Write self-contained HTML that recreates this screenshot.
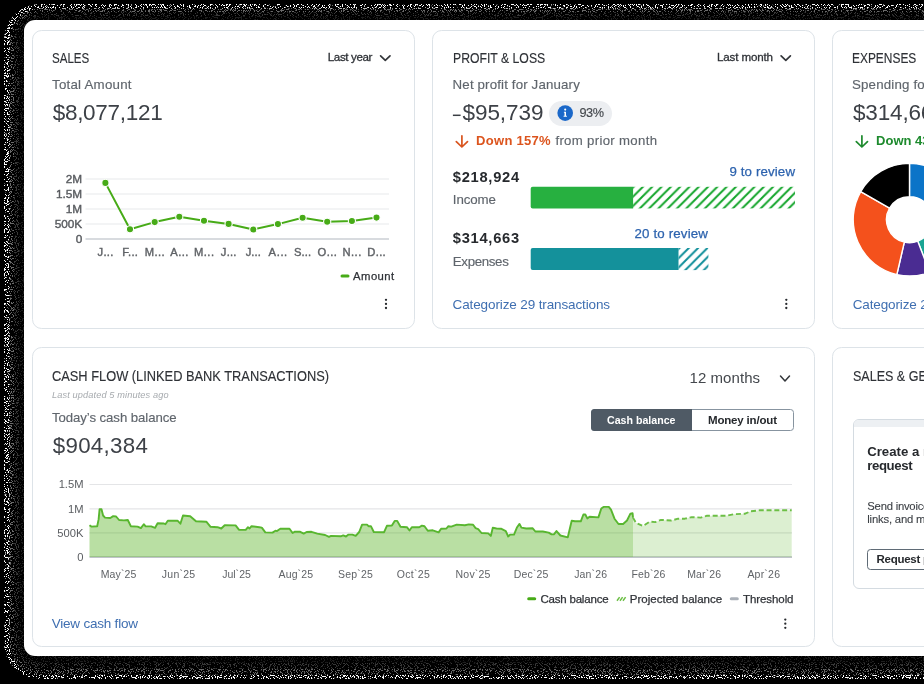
<!DOCTYPE html>
<html><head><meta charset="utf-8">
<style>
html,body{margin:0;padding:0;background:#000;}
body{width:924px;height:684px;position:relative;overflow:hidden;font-family:"Liberation Sans",sans-serif;color:#393a3d;}
.abs{position:absolute;}
#panel{position:absolute;left:24px;top:20px;width:912px;height:636px;background:#fff;border-radius:11px 0 0 11px;}
.card{position:absolute;box-sizing:border-box;border:1.3px solid #dde3e8;border-radius:9.6px;background:#fff;}
.t{position:absolute;white-space:nowrap;line-height:1;}
.b{display:inline-block;width:0;height:0;}
#tx{position:absolute;left:0;top:0;width:924px;height:684px;will-change:transform;}
svg{position:absolute;left:0;top:0;overflow:visible;}
</style></head><body>
<svg width="924" height="684" viewBox="0 0 924 684" style="z-index:0">
<defs>
<filter id="nz" x="0" y="0" width="924" height="684" filterUnits="userSpaceOnUse" color-interpolation-filters="sRGB">
<feTurbulence type="fractalNoise" baseFrequency="0.85" numOctaves="2" seed="7"/>
<feColorMatrix type="matrix" values="0 0 0 0 1  0 0 0 0 1  0 0 0 0 1  30 0 0 0 -16.8"/>
</filter>
<mask id="nm" maskUnits="userSpaceOnUse" x="0" y="0" width="924" height="684"><rect width="924" height="684" filter="url(#nz)"/></mask>
</defs>
<g mask="url(#nm)">
<rect x="4" y="4" width="960" height="675" rx="36" fill="#fff"/>
<rect x="9.5" y="8.5" width="960" height="666.5" rx="31" fill="#6a6a6a"/>
<rect x="14" y="12" width="960" height="657" rx="26" fill="#383838"/>
<rect x="19" y="16" width="960" height="647" rx="20" fill="#1f1f1f"/>
</g>
</svg>
<div id="panel"></div>
<div class="card" style="left:31.8px;top:30.05px;width:382.9px;height:299.1px;"></div>
<div class="card" style="left:431.8px;top:30.05px;width:382.9px;height:299.1px;"></div>
<div class="card" style="left:831.9px;top:30.05px;width:382.9px;height:299.1px;"></div>
<div class="card" style="left:31.8px;top:347.45px;width:782.9px;height:299.1px;"></div>
<div class="card" style="left:831.9px;top:347.45px;width:382.9px;height:299.1px;"></div>
<div class="abs" style="left:852.5px;top:419px;width:200px;height:169.5px;box-sizing:border-box;border:1.5px solid #d4dbe1;border-radius:6px;background:#fff;overflow:hidden;"><div style="height:6.5px;background:#edf0f3;"></div></div>
<div class="abs" style="left:867.3px;top:548.5px;width:140px;height:21px;box-sizing:border-box;border:1.7px solid #5f6b76;border-radius:3.5px;background:#fff;"></div>
<div class="abs" style="left:549px;top:100.5px;width:63px;height:25.5px;border-radius:13px;background:#eceef1;"></div>
<div class="abs" style="left:590.8px;top:408.9px;width:203.2px;height:21.9px;box-sizing:border-box;border:1.6px solid #8794a0;border-radius:3.5px;background:#fff;"></div>
<div class="abs" style="left:590.8px;top:408.9px;width:101.4px;height:21.9px;border-radius:3.5px 0 0 3.5px;background:#4f5a65;"></div>
<svg width="924" height="684" viewBox="0 0 924 684">
<defs>
<pattern id="hg" width="9.3" height="9.3" patternUnits="userSpaceOnUse" patternTransform="translate(633.6,186.8)"><path d="M-2,11.3 L11.3,-2 M-2,2 L2,-2 M7.3,11.3 L11.3,7.3" stroke="#14a52b" stroke-width="2" fill="none"/></pattern>
<pattern id="ht" width="9.3" height="9.3" patternUnits="userSpaceOnUse" patternTransform="translate(679.5,248)"><path d="M-2,11.3 L11.3,-2 M-2,2 L2,-2 M7.3,11.3 L11.3,7.3" stroke="#0e8e99" stroke-width="2" fill="none"/></pattern>
</defs>
<polyline points="380.6,55.9 385.3,60.3 390.0,55.9" fill="none" stroke="#33363a" stroke-width="1.7" stroke-linecap="round" stroke-linejoin="round"/>
<polyline points="781.1,55.9 785.8,60.3 790.4,55.9" fill="none" stroke="#33363a" stroke-width="1.7" stroke-linecap="round" stroke-linejoin="round"/>
<polyline points="780.5,376.0 785.0,381.0 789.5,376.0" fill="none" stroke="#33363a" stroke-width="1.5" stroke-linecap="round" stroke-linejoin="round"/>
<circle cx="386.0" cy="299.8" r="1.15" fill="#26292d"/>
<circle cx="386.0" cy="303.9" r="1.15" fill="#26292d"/>
<circle cx="386.0" cy="308.0" r="1.15" fill="#26292d"/>
<circle cx="786.3" cy="299.8" r="1.15" fill="#26292d"/>
<circle cx="786.3" cy="303.9" r="1.15" fill="#26292d"/>
<circle cx="786.3" cy="308.0" r="1.15" fill="#26292d"/>
<circle cx="785.3" cy="619.6" r="1.15" fill="#26292d"/>
<circle cx="785.3" cy="623.7" r="1.15" fill="#26292d"/>
<circle cx="785.3" cy="627.8" r="1.15" fill="#26292d"/>
<line x1="85.5" x2="389" y1="179" y2="179" stroke="#e8e9eb" stroke-width="1.1"/>
<line x1="85.5" x2="389" y1="194" y2="194" stroke="#e8e9eb" stroke-width="1.1"/>
<line x1="85.5" x2="389" y1="209" y2="209" stroke="#e8e9eb" stroke-width="1.1"/>
<line x1="85.5" x2="389" y1="224" y2="224" stroke="#e8e9eb" stroke-width="1.1"/>
<line x1="85.5" x2="389" y1="239" y2="239" stroke="#cbcfd4" stroke-width="1.4"/>
<polyline points="105.4,182.9 130.0,229.3 154.7,222.1 179.3,216.7 204.0,220.8 228.6,223.9 253.3,229.5 277.9,224.1 302.6,217.8 327.2,221.7 351.9,221.0 376.5,217.6" fill="none" stroke="#47ab17" stroke-width="2" stroke-linejoin="round"/>
<circle cx="105.4" cy="182.9" r="3.6" fill="#47ab17" stroke="#fff" stroke-width="1.1"/>
<circle cx="130.0" cy="229.3" r="3.6" fill="#47ab17" stroke="#fff" stroke-width="1.1"/>
<circle cx="154.7" cy="222.1" r="3.6" fill="#47ab17" stroke="#fff" stroke-width="1.1"/>
<circle cx="179.3" cy="216.7" r="3.6" fill="#47ab17" stroke="#fff" stroke-width="1.1"/>
<circle cx="204.0" cy="220.8" r="3.6" fill="#47ab17" stroke="#fff" stroke-width="1.1"/>
<circle cx="228.6" cy="223.9" r="3.6" fill="#47ab17" stroke="#fff" stroke-width="1.1"/>
<circle cx="253.3" cy="229.5" r="3.6" fill="#47ab17" stroke="#fff" stroke-width="1.1"/>
<circle cx="277.9" cy="224.1" r="3.6" fill="#47ab17" stroke="#fff" stroke-width="1.1"/>
<circle cx="302.6" cy="217.8" r="3.6" fill="#47ab17" stroke="#fff" stroke-width="1.1"/>
<circle cx="327.2" cy="221.7" r="3.6" fill="#47ab17" stroke="#fff" stroke-width="1.1"/>
<circle cx="351.9" cy="221.0" r="3.6" fill="#47ab17" stroke="#fff" stroke-width="1.1"/>
<circle cx="376.5" cy="217.6" r="3.6" fill="#47ab17" stroke="#fff" stroke-width="1.1"/>
<line x1="342" x2="348" y1="276" y2="276" stroke="#47ab17" stroke-width="3" stroke-linecap="round"/>
<circle cx="565.2" cy="113.1" r="7.8" fill="#1b68c9"/>
<circle cx="565.2" cy="109.6" r="1.05" fill="#fff"/><path d="M563.9,111.7h2.1v4.1h0.9v1h-3.3v-1h0.9v-3.1h-0.6z" fill="#fff"/>
<line x1="452.9" x2="460.6" y1="115.3" y2="115.3" stroke="#3a3e44" stroke-width="1.5"/>
<path d="M461.9,135.8 V146.8 M456.3,141.6 L461.9,147 L467.5,141.6" fill="none" stroke="#d9541e" stroke-width="1.7" stroke-linecap="round" stroke-linejoin="round"/>
<path d="M861.9,135.8 V146.8 M856.3,141.6 L861.9,147 L867.5,141.6" fill="none" stroke="#1d8a2d" stroke-width="1.7" stroke-linecap="round" stroke-linejoin="round"/>
<path d="M532.7,186.8 H633.1 V208.4 H532.7 a2,2 0 0 1 -2,-2 V188.8 a2,2 0 0 1 2,-2z" fill="#27b040"/>
<rect x="633.1" y="186.8" width="161.9" height="21.6" fill="url(#hg)"/>
<path d="M532.7,248 H678.5 V270.1 H532.7 a2,2 0 0 1 -2,-2 V250 a2,2 0 0 1 2,-2z" fill="#14919b"/>
<rect x="678.5" y="248" width="29.9" height="22.1" fill="url(#ht)"/>
<path d="M909.50,163.40 A56.3,56.3 0 0 1 958.26,247.85 L929.42,231.20 A23,23 0 0 0 909.50,196.70 Z" fill="#0b74c8" stroke="#fff" stroke-width="1.4" stroke-linejoin="round"/>
<path d="M958.26,247.85 A56.3,56.3 0 0 1 929.68,272.26 L917.74,241.17 A23,23 0 0 0 929.42,231.20 Z" fill="#1aa594" stroke="#fff" stroke-width="1.4" stroke-linejoin="round"/>
<path d="M929.68,272.26 A56.3,56.3 0 0 1 896.84,274.56 L904.33,242.11 A23,23 0 0 0 917.74,241.17 Z" fill="#4a2c92" stroke="#fff" stroke-width="1.4" stroke-linejoin="round"/>
<path d="M896.84,274.56 A56.3,56.3 0 0 1 860.74,191.55 L889.58,208.20 A23,23 0 0 0 904.33,242.11 Z" fill="#f4511c" stroke="#fff" stroke-width="1.4" stroke-linejoin="round"/>
<path d="M860.74,191.55 A56.3,56.3 0 0 1 909.50,163.40 L909.50,196.70 A23,23 0 0 0 889.58,208.20 Z" fill="#000" stroke="#fff" stroke-width="1.4" stroke-linejoin="round"/>
<line x1="89.5" x2="792" y1="484.5" y2="484.5" stroke="#e4e5e7" stroke-width="1.2"/>
<line x1="89.5" x2="792" y1="508.8" y2="508.8" stroke="#e4e5e7" stroke-width="1.2"/>
<line x1="89.5" x2="792" y1="532.9" y2="532.9" stroke="#e4e5e7" stroke-width="1.2"/>
<line x1="89.5" x2="792" y1="557.1" y2="557.1" stroke="#bfc3c9" stroke-width="1.6"/>
<polygon points="89.5,525.2 91.4,526.6 97.2,526.2 98.6,519.4 99.6,509.2 101.5,509.2 103.1,515.5 105.0,517.6 110.3,518.0 113.2,516.1 116.1,516.5 119.1,520.0 123.9,520.4 127.8,520.0 130.8,526.2 137.6,526.6 140.9,528.1 143.8,524.2 145.4,526.2 151.2,526.4 155.1,527.8 157.6,523.3 163.9,523.5 165.4,524.2 167.8,520.7 177.5,520.7 180.4,523.7 183.0,515.5 190.2,516.3 196.0,521.3 206.3,521.7 210.6,526.8 217.5,527.2 221.3,528.5 224.7,525.2 235.6,525.4 238.9,529.7 245.7,529.9 248.0,527.2 249.6,528.5 251.5,526.2 259.3,527.2 261.8,527.6 265.3,532.4 272.5,532.6 275.4,530.7 277.0,531.1 280.3,528.7 289.5,528.7 292.6,533.0 294.9,531.7 299.8,531.7 303.7,533.6 306.6,532.0 311.5,531.8 317.3,533.6 325.1,535.0 329.0,536.9 331.0,535.9 340.7,536.3 343.2,535.4 346.0,536.5 348.5,534.6 352.4,534.6 355.7,535.9 359.2,532.0 362.1,524.6 367.0,524.6 368.5,526.2 370.9,526.2 373.8,532.0 384.1,532.2 386.9,525.8 391.9,525.6 394.7,520.9 397.2,520.9 400.5,526.8 406.9,527.2 409.5,530.5 411.8,527.2 419.2,527.2 421.9,525.6 424.5,526.2 427.8,530.7 432.8,530.3 438.6,532.4 441.1,528.7 446.4,528.5 448.4,526.2 451.3,526.6 456.7,524.6 464.9,525.2 468.8,524.4 473.1,524.8 475.6,528.1 478.2,529.1 481.5,533.0 488.3,533.4 490.8,535.9 492.8,527.8 496.5,528.5 501.0,528.7 505.8,531.1 508.2,536.5 510.1,534.6 514.0,534.6 517.1,527.2 519.5,523.9 521.4,527.6 526.3,528.5 532.7,528.3 535.4,531.5 542.8,531.5 548.7,532.6 551.6,534.4 554.1,534.2 556.5,531.1 560.4,535.5 567.8,537.3 571.7,520.7 575.0,521.3 580.8,521.3 583.4,514.5 585.3,514.5 587.3,518.4 589.6,516.8 598.4,517.4 601.3,508.5 603.5,506.9 608.8,506.9 611.0,509.6 614.5,518.7 618.5,524.0 623.1,524.0 627.0,520.5 630.4,513.7 632.6,513.3 633.0,517.6 633,557.1 89.5,557.1" fill="#4fae1a" fill-opacity="0.4"/>
<polygon points="633.0,517.6 636.0,522.8 642.9,526.0 649.7,521.7 655.4,522.1 661.0,519.9 671.3,520.5 678.1,518.7 684.9,518.7 691.7,517.1 700.8,517.6 706.5,515.8 725.8,515.8 733.8,514.2 745.1,513.7 750.8,511.2 759.9,510.3 791.7,510.3 791.7,557.1 633,557.1" fill="#4fae1a" fill-opacity="0.2"/>
<polyline points="89.5,525.2 91.4,526.6 97.2,526.2 98.6,519.4 99.6,509.2 101.5,509.2 103.1,515.5 105.0,517.6 110.3,518.0 113.2,516.1 116.1,516.5 119.1,520.0 123.9,520.4 127.8,520.0 130.8,526.2 137.6,526.6 140.9,528.1 143.8,524.2 145.4,526.2 151.2,526.4 155.1,527.8 157.6,523.3 163.9,523.5 165.4,524.2 167.8,520.7 177.5,520.7 180.4,523.7 183.0,515.5 190.2,516.3 196.0,521.3 206.3,521.7 210.6,526.8 217.5,527.2 221.3,528.5 224.7,525.2 235.6,525.4 238.9,529.7 245.7,529.9 248.0,527.2 249.6,528.5 251.5,526.2 259.3,527.2 261.8,527.6 265.3,532.4 272.5,532.6 275.4,530.7 277.0,531.1 280.3,528.7 289.5,528.7 292.6,533.0 294.9,531.7 299.8,531.7 303.7,533.6 306.6,532.0 311.5,531.8 317.3,533.6 325.1,535.0 329.0,536.9 331.0,535.9 340.7,536.3 343.2,535.4 346.0,536.5 348.5,534.6 352.4,534.6 355.7,535.9 359.2,532.0 362.1,524.6 367.0,524.6 368.5,526.2 370.9,526.2 373.8,532.0 384.1,532.2 386.9,525.8 391.9,525.6 394.7,520.9 397.2,520.9 400.5,526.8 406.9,527.2 409.5,530.5 411.8,527.2 419.2,527.2 421.9,525.6 424.5,526.2 427.8,530.7 432.8,530.3 438.6,532.4 441.1,528.7 446.4,528.5 448.4,526.2 451.3,526.6 456.7,524.6 464.9,525.2 468.8,524.4 473.1,524.8 475.6,528.1 478.2,529.1 481.5,533.0 488.3,533.4 490.8,535.9 492.8,527.8 496.5,528.5 501.0,528.7 505.8,531.1 508.2,536.5 510.1,534.6 514.0,534.6 517.1,527.2 519.5,523.9 521.4,527.6 526.3,528.5 532.7,528.3 535.4,531.5 542.8,531.5 548.7,532.6 551.6,534.4 554.1,534.2 556.5,531.1 560.4,535.5 567.8,537.3 571.7,520.7 575.0,521.3 580.8,521.3 583.4,514.5 585.3,514.5 587.3,518.4 589.6,516.8 598.4,517.4 601.3,508.5 603.5,506.9 608.8,506.9 611.0,509.6 614.5,518.7 618.5,524.0 623.1,524.0 627.0,520.5 630.4,513.7 632.6,513.3 633.0,517.6" fill="none" stroke="#58b62f" stroke-width="1.9" stroke-linejoin="round"/>
<polyline points="633.0,517.6 636.0,522.8 642.9,526.0 649.7,521.7 655.4,522.1 661.0,519.9 671.3,520.5 678.1,518.7 684.9,518.7 691.7,517.1 700.8,517.6 706.5,515.8 725.8,515.8 733.8,514.2 745.1,513.7 750.8,511.2 759.9,510.3 791.7,510.3" fill="none" stroke="#6cbf45" stroke-width="1.9" stroke-dasharray="5,2.8" stroke-linejoin="round"/>
<line x1="528.7" x2="534.7" y1="598.8" y2="598.8" stroke="#47ab17" stroke-width="3" stroke-linecap="round"/>
<path d="M617,600.7 l2.6,-3.6 M620,600.7 l2.6,-3.6 M623,600.7 l2.6,-3.6" fill="none" stroke="#6cbf45" stroke-width="1.5"/>
<line x1="731.3" x2="737.3" y1="598.8" y2="598.8" stroke="#aab0b8" stroke-width="3" stroke-linecap="round"/>
</svg>
<div id="tx">
<div class="t" id="t0" style="top:51.01px;font-size:14px;color:#2f3237;-webkit-text-stroke:0.15px #2f3237;left:52.30px;transform-origin:0 0;transform:scaleX(0.8241);">SALES</div>
<div class="t" id="t1" style="top:51.01px;font-size:11.6px;color:#2f3237;-webkit-text-stroke:0.3px #2f3237;letter-spacing:-0.388px;left:327.80px;">Last year</div>
<div class="t" id="t2" style="top:78.01px;font-size:13.3px;color:#5f656c;-webkit-text-stroke:0.15px #5f656c;letter-spacing:0.239px;left:52.00px;">Total Amount</div>
<div class="t" id="t3" style="top:102.00px;font-size:22.5px;color:#3d4147;letter-spacing:-0.292px;left:52.70px;">$8,077,121</div>
<div class="t" id="t4" style="top:174.01px;font-size:11.8px;color:#595c60;-webkit-text-stroke:0.4px #595c60;right:841.80px;">2M</div>
<div class="t" id="t5" style="top:189.01px;font-size:11.8px;color:#595c60;-webkit-text-stroke:0.4px #595c60;right:841.80px;">1.5M</div>
<div class="t" id="t6" style="top:204.01px;font-size:11.8px;color:#595c60;-webkit-text-stroke:0.4px #595c60;right:841.80px;">1M</div>
<div class="t" id="t7" style="top:219.01px;font-size:11.8px;color:#595c60;-webkit-text-stroke:0.4px #595c60;right:841.80px;">500K</div>
<div class="t" id="t8" style="top:234.01px;font-size:11.8px;color:#595c60;-webkit-text-stroke:0.4px #595c60;right:841.80px;">0</div>
<div class="t" id="t9" style="top:247.01px;font-size:11.2px;color:#5f6266;-webkit-text-stroke:0.4px #5f6266;letter-spacing:0.293px;left:105.55px;transform:translateX(-50%);">J...</div>
<div class="t" id="t10" style="top:247.01px;font-size:11.2px;color:#5f6266;-webkit-text-stroke:0.4px #5f6266;letter-spacing:0.226px;left:130.16px;transform:translateX(-50%);">F...</div>
<div class="t" id="t11" style="top:247.01px;font-size:11.2px;color:#5f6266;-webkit-text-stroke:0.4px #5f6266;letter-spacing:0.481px;left:154.93px;transform:translateX(-50%);">M...</div>
<div class="t" id="t12" style="top:247.01px;font-size:11.2px;color:#5f6266;-webkit-text-stroke:0.4px #5f6266;letter-spacing:0.401px;left:179.54px;transform:translateX(-50%);">A...</div>
<div class="t" id="t13" style="top:247.01px;font-size:11.2px;color:#5f6266;-webkit-text-stroke:0.4px #5f6266;letter-spacing:0.481px;left:204.22px;transform:translateX(-50%);">M...</div>
<div class="t" id="t14" style="top:247.01px;font-size:11.2px;color:#5f6266;-webkit-text-stroke:0.4px #5f6266;letter-spacing:0.226px;left:228.74px;transform:translateX(-50%);">J...</div>
<div class="t" id="t15" style="top:247.01px;font-size:11.2px;color:#5f6266;-webkit-text-stroke:0.4px #5f6266;letter-spacing:0.093px;left:253.32px;transform:translateX(-50%);">J...</div>
<div class="t" id="t16" style="top:247.01px;font-size:11.2px;color:#5f6266;-webkit-text-stroke:0.4px #5f6266;letter-spacing:0.601px;left:278.22px;transform:translateX(-50%);">A...</div>
<div class="t" id="t17" style="top:247.01px;font-size:11.2px;color:#5f6266;-webkit-text-stroke:0.4px #5f6266;letter-spacing:0.034px;left:302.58px;transform:translateX(-50%);">S...</div>
<div class="t" id="t18" style="top:247.01px;font-size:11.2px;color:#5f6266;-webkit-text-stroke:0.4px #5f6266;letter-spacing:0.490px;left:327.45px;transform:translateX(-50%);">O...</div>
<div class="t" id="t19" style="top:247.01px;font-size:11.2px;color:#5f6266;-webkit-text-stroke:0.4px #5f6266;letter-spacing:0.465px;left:352.08px;transform:translateX(-50%);">N...</div>
<div class="t" id="t20" style="top:247.01px;font-size:11.2px;color:#5f6266;-webkit-text-stroke:0.4px #5f6266;letter-spacing:0.331px;left:376.66px;transform:translateX(-50%);">D...</div>
<div class="t" id="t21" style="top:271.01px;font-size:11.3px;color:#2f3237;-webkit-text-stroke:0.25px #2f3237;letter-spacing:0.433px;left:353.10px;">Amount</div>
<div class="t" id="t22" style="top:51.01px;font-size:14px;color:#2f3237;-webkit-text-stroke:0.15px #2f3237;left:452.60px;transform-origin:0 0;transform:scaleX(0.8735);">PROFIT &amp; LOSS</div>
<div class="t" id="t23" style="top:51.01px;font-size:11.6px;color:#2f3237;-webkit-text-stroke:0.3px #2f3237;letter-spacing:-0.151px;left:717.00px;">Last month</div>
<div class="t" id="t24" style="top:78.01px;font-size:13.3px;color:#5f656c;-webkit-text-stroke:0.15px #5f656c;letter-spacing:0.144px;left:452.60px;">Net profit for January</div>
<div class="t" id="t25" style="top:102.00px;font-size:22.5px;color:#3d4147;letter-spacing:-0.057px;left:462.50px;">$95,739</div>
<div class="t" id="t26" style="top:107.01px;font-size:12.7px;color:#44484d;-webkit-text-stroke:0.15px #44484d;letter-spacing:-0.353px;left:579.40px;">93%</div>
<div class="t" id="t27" style="top:134.00px;font-size:13px;color:#dc541d;font-weight:bold;letter-spacing:0.281px;left:476.10px;">Down 157%</div>
<div class="t" id="t28" style="top:134.00px;font-size:13.2px;color:#5f656c;-webkit-text-stroke:0.15px #5f656c;letter-spacing:0.323px;left:555.40px;">from prior month</div>
<div class="t" id="t29" style="top:170.01px;font-size:14.7px;color:#26292d;font-weight:bold;letter-spacing:0.719px;left:452.80px;">$218,924</div>
<div class="t" id="t30" style="top:193.01px;font-size:13.3px;color:#5f656c;-webkit-text-stroke:0.15px #5f656c;letter-spacing:-0.082px;left:452.80px;">Income</div>
<div class="t" id="t31" style="top:165.01px;font-size:13.3px;color:#2d63ae;-webkit-text-stroke:0.25px #2d63ae;letter-spacing:0.130px;left:729.40px;">9 to review</div>
<div class="t" id="t32" style="top:231.00px;font-size:14.7px;color:#26292d;font-weight:bold;letter-spacing:0.719px;left:452.80px;">$314,663</div>
<div class="t" id="t33" style="top:255.00px;font-size:13.3px;color:#5f656c;-webkit-text-stroke:0.15px #5f656c;letter-spacing:-0.344px;left:452.80px;">Expenses</div>
<div class="t" id="t34" style="top:227.00px;font-size:13.3px;color:#2d63ae;-webkit-text-stroke:0.25px #2d63ae;letter-spacing:0.172px;left:634.40px;">20 to review</div>
<div class="t" id="t35" style="top:298.01px;font-size:13.5px;color:#3f6fb1;letter-spacing:-0.124px;left:452.60px;">Categorize 29 transactions</div>
<div class="t" id="t36" style="top:51.01px;font-size:14px;color:#2f3237;-webkit-text-stroke:0.15px #2f3237;left:852.40px;transform-origin:0 0;transform:scaleX(0.8518);">EXPENSES</div>
<div class="t" id="t37" style="top:78.01px;font-size:13.3px;color:#5f656c;-webkit-text-stroke:0.15px #5f656c;letter-spacing:0.173px;left:852.00px;">Spending for January</div>
<div class="t" id="t38" style="top:102.00px;font-size:22.5px;color:#3d4147;letter-spacing:-0.166px;left:853.00px;">$314,663</div>
<div class="t" id="t39" style="top:134.00px;font-size:13px;color:#1d8a2d;font-weight:bold;letter-spacing:-0.002px;left:876.10px;">Down 43%</div>
<div class="t" id="t40" style="top:298.01px;font-size:13.5px;color:#3f6fb1;letter-spacing:-0.124px;left:852.70px;">Categorize 29 transactions</div>
<div class="t" id="t41" style="top:369.01px;font-size:14px;color:#2f3237;-webkit-text-stroke:0.15px #2f3237;left:52.00px;transform-origin:0 0;transform:scaleX(0.9162);">CASH FLOW (LINKED BANK TRANSACTIONS)</div>
<div class="t" id="t42" style="top:370.00px;font-size:15px;color:#44484d;letter-spacing:0.069px;left:689.50px;">12 months</div>
<div class="t" id="t43" style="top:391.00px;font-size:9.2px;color:#a6aaae;font-style:italic;letter-spacing:0.128px;left:52.00px;">Last updated 5 minutes ago</div>
<div class="t" id="t44" style="top:411.00px;font-size:13.2px;color:#5f656c;-webkit-text-stroke:0.15px #5f656c;letter-spacing:-0.061px;left:51.90px;">Today’s cash balance</div>
<div class="t" id="t45" style="top:435.01px;font-size:22.3px;color:#3d4147;letter-spacing:0.286px;left:52.80px;">$904,384</div>
<div class="t" id="t46" style="top:415.01px;font-size:11.5px;color:#fff;font-weight:bold;left:607.00px;transform-origin:0 0;transform:scaleX(0.9237);">Cash balance</div>
<div class="t" id="t47" style="top:415.01px;font-size:11.5px;color:#26292d;font-weight:bold;letter-spacing:-0.175px;left:708.00px;">Money in/out</div>
<div class="t" id="t48" style="top:479.00px;font-size:11.2px;color:#5a5d61;right:840.50px;">1.5M</div>
<div class="t" id="t49" style="top:504.00px;font-size:11.2px;color:#5a5d61;right:840.50px;">1M</div>
<div class="t" id="t50" style="top:528.01px;font-size:11.2px;color:#5a5d61;right:840.50px;">500K</div>
<div class="t" id="t51" style="top:552.01px;font-size:11.2px;color:#5a5d61;right:840.50px;">0</div>
<div class="t" id="t52" style="top:569.01px;font-size:10.5px;color:#606367;letter-spacing:0.137px;left:118.57px;transform:translateX(-50%);">May`25</div>
<div class="t" id="t53" style="top:569.01px;font-size:10.5px;color:#606367;letter-spacing:0.238px;left:178.62px;transform:translateX(-50%);">Jun`25</div>
<div class="t" id="t54" style="top:569.01px;font-size:10.5px;color:#606367;letter-spacing:0.018px;left:236.51px;transform:translateX(-50%);">Jul`25</div>
<div class="t" id="t55" style="top:569.01px;font-size:10.5px;color:#606367;letter-spacing:0.128px;left:295.86px;transform:translateX(-50%);">Aug`25</div>
<div class="t" id="t56" style="top:569.01px;font-size:10.5px;color:#606367;letter-spacing:0.188px;left:355.59px;transform:translateX(-50%);">Sep`25</div>
<div class="t" id="t57" style="top:569.01px;font-size:10.5px;color:#606367;letter-spacing:0.297px;left:413.45px;transform:translateX(-50%);">Oct`25</div>
<div class="t" id="t58" style="top:569.01px;font-size:10.5px;color:#606367;letter-spacing:0.188px;left:473.09px;transform:translateX(-50%);">Nov`25</div>
<div class="t" id="t59" style="top:569.01px;font-size:10.5px;color:#606367;letter-spacing:0.148px;left:531.07px;transform:translateX(-50%);">Dec`25</div>
<div class="t" id="t60" style="top:569.01px;font-size:10.5px;color:#606367;letter-spacing:0.158px;left:590.68px;transform:translateX(-50%);">Jan`26</div>
<div class="t" id="t61" style="top:569.01px;font-size:10.5px;color:#606367;letter-spacing:0.124px;left:648.46px;transform:translateX(-50%);">Feb`26</div>
<div class="t" id="t62" style="top:569.01px;font-size:10.5px;color:#606367;letter-spacing:0.127px;left:704.26px;transform:translateX(-50%);">Mar`26</div>
<div class="t" id="t63" style="top:569.01px;font-size:10.5px;color:#606367;letter-spacing:0.217px;left:763.81px;transform:translateX(-50%);">Apr`26</div>
<div class="t" id="t64" style="top:594.00px;font-size:11.5px;color:#2f3237;-webkit-text-stroke:0.25px #2f3237;letter-spacing:-0.193px;left:540.40px;">Cash balance</div>
<div class="t" id="t65" style="top:594.00px;font-size:11.5px;color:#2f3237;-webkit-text-stroke:0.25px #2f3237;letter-spacing:0.027px;left:629.70px;">Projected balance</div>
<div class="t" id="t66" style="top:594.00px;font-size:11.5px;color:#2f3237;-webkit-text-stroke:0.25px #2f3237;letter-spacing:-0.080px;left:743.00px;">Threshold</div>
<div class="t" id="t67" style="top:617.01px;font-size:13.5px;color:#3f6fb1;letter-spacing:-0.211px;left:51.70px;">View cash flow</div>
<div class="t" id="t68" style="top:369.01px;font-size:14px;color:#2f3237;-webkit-text-stroke:0.15px #2f3237;left:852.50px;transform-origin:0 0;transform:scaleX(0.8946);">SALES &amp; GET PAID</div>
<div class="t" id="t69" style="top:445.01px;font-size:13.2px;color:#26292d;font-weight:bold;left:867.20px;">Create a new</div>
<div class="t" id="t70" style="top:459.01px;font-size:13.2px;color:#26292d;font-weight:bold;letter-spacing:-0.373px;left:867.20px;">request</div>
<div class="t" id="t71" style="top:501.01px;font-size:11.3px;color:#3a3e43;-webkit-text-stroke:0.1px #3a3e43;letter-spacing:-0.236px;left:867.30px;">Send invoices, payment</div>
<div class="t" id="t72" style="top:514.02px;font-size:11.3px;color:#3a3e43;-webkit-text-stroke:0.1px #3a3e43;letter-spacing:-0.186px;left:867.30px;">links, and more</div>
<div class="t" id="t73" style="top:554.01px;font-size:11.5px;color:#26292d;font-weight:bold;letter-spacing:-0.276px;left:876.60px;">Request payment</div>
</div>
</body></html>
